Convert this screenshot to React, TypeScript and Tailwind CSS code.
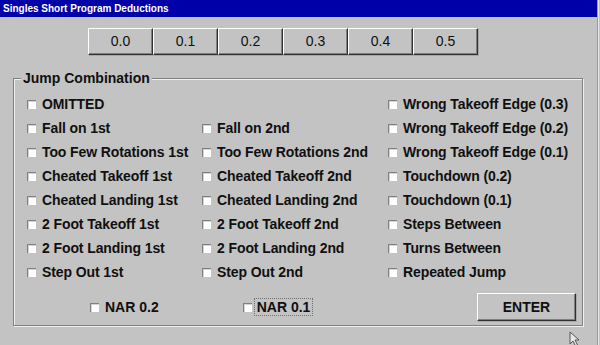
import React from 'react';

const col1 = [
  'OMITTED',
  'Fall on 1st',
  'Too Few Rotations 1st',
  'Cheated Takeoff 1st',
  'Cheated Landing 1st',
  '2 Foot Takeoff 1st',
  '2 Foot Landing 1st',
  'Step Out 1st',
];

const col2 = [
  '',
  'Fall on 2nd',
  'Too Few Rotations 2nd',
  'Cheated Takeoff 2nd',
  'Cheated Landing 2nd',
  '2 Foot Takeoff 2nd',
  '2 Foot Landing 2nd',
  'Step Out 2nd',
];

const col3 = [
  'Wrong Takeoff Edge (0.3)',
  'Wrong Takeoff Edge (0.2)',
  'Wrong Takeoff Edge (0.1)',
  'Touchdown (0.2)',
  'Touchdown (0.1)',
  'Steps Between',
  'Turns Between',
  'Repeated Jump',
];

function Box() {
  return (
    <span className="w-[9px] h-[9px] shrink-0 bg-white border-t border-l border-[#808080] shadow-[inset_1px_1px_0_#d4d4d4]" />
  );
}

function Check({ label }: { label: string }) {
  if (!label) return <div className="h-[24px]" />;
  return (
    <div className="h-[24px] flex items-center gap-[6px]">
      <Box />
      <span className="tracking-[-0.1px]">{label}</span>
    </div>
  );
}

function RaisedButton({ children, className }: { children: React.ReactNode; className: string }) {
  return (
    <div
      className={
        'flex items-center justify-center border-t border-l border-t-white border-l-white border-r border-b border-r-[#303030] border-b-[#303030] shadow-[inset_-1px_-1px_0_#808080,1px_1px_0_#a8a8a8] bg-[#c3c3c3] ' +
        className
      }
    >
      {children}
    </div>
  );
}

export default function App() {
  return (
    <div className="w-[600px] h-[345px] bg-[#c3c3c3] relative overflow-hidden font-['Liberation_Sans',Arial,sans-serif] text-[#101010]">
      <div className="w-[598px] h-full border-r border-[#9a9a9a] shadow-[1px_0_0_#e8e8e8]">
        <div className="h-[17px] bg-[#0000a8] text-white text-[10px] font-bold leading-[17px] pl-[3px]">
          Singles Short Program Deductions
        </div>

        <div className="flex ml-[88px] mt-[11px]">
          {['0.0', '0.1', '0.2', '0.3', '0.4', '0.5'].map((v) => (
            <RaisedButton key={v} className="w-[65px] h-[27px] text-[14px]">
              {v}
            </RaisedButton>
          ))}
        </div>

        <fieldset className="ml-[13px] mt-[15px] w-[570px] border border-[#808080] shadow-[inset_1px_1px_0_#f0f0f0,1px_1px_0_#f0f0f0] pb-[4px]">
          <legend className="ml-[7px] px-[2px] text-[14px] font-bold leading-[16px] bg-[#c3c3c3]">
            Jump Combination
          </legend>
          <div className="grid grid-cols-[175px_186px_1fr] pl-[13px] pt-[6px] text-[14px] font-bold">
            <div>
              {col1.map((l) => (
                <Check key={l} label={l} />
              ))}
            </div>
            <div>
              {col2.map((l, i) => (
                <Check key={i} label={l} />
              ))}
            </div>
            <div>
              {col3.map((l) => (
                <Check key={l} label={l} />
              ))}
            </div>
          </div>
          <div className="flex items-center h-[28px] mt-[9px] text-[14px] font-bold">
            <div className="ml-[76px] flex items-center gap-[6px]">
              <Box />
              <span>NAR 0.2</span>
            </div>
            <div className="ml-[84px] flex items-center gap-[2px]">
              <Box />
              <span className="px-[2px] border border-dotted border-[#707070] leading-[16px]">NAR 0.1</span>
            </div>
            <RaisedButton className="ml-auto mr-[6px] w-[99px] h-[28px] text-[14px] font-bold">
              ENTER
            </RaisedButton>
          </div>
        </fieldset>
      </div>

      <svg className="absolute left-[569px] top-[331px]" width="12" height="16" viewBox="0 0 12 16">
        <path d="M1 1 L1 13 L4 10 L6.5 15 L8.5 14 L6 9 L10 9 Z" fill="#e8e8e8" stroke="#555" strokeWidth="1" />
      </svg>
    </div>
  );
}
